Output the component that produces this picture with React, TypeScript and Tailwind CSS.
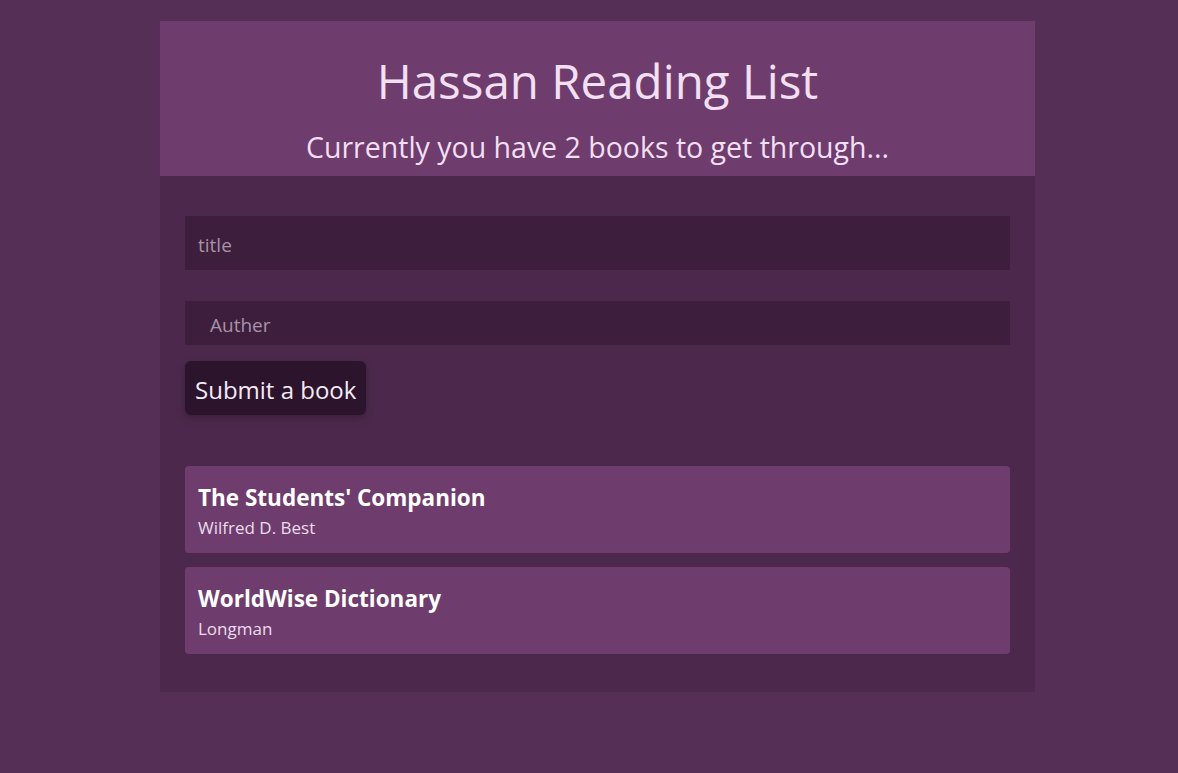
import { useState } from "react";

type Book = {
  title: string;
  author: string;
};

const books: Book[] = [
  { title: "The Students' Companion", author: "Wilfred D. Best" },
  { title: "WorldWise Dictionary", author: "Longman" },
];

export default function App() {
  const [title, setTitle] = useState("");
  const [author, setAuthor] = useState("");

  return (
    <div className="min-h-screen bg-[#552f55] pt-[21px] pl-[160px] font-['Open_Sans',sans-serif]">
      <div className="w-[875px]">
        <header className="flex h-[155px] flex-col items-center bg-[#6e3d6e] text-[#f2dff2]">
          <h1 className="mt-[36px] text-[47.5px] leading-none font-normal">Hassan Reading List</h1>
          <p className="mt-[28px] text-[28.5px] leading-none">Currently you have {books.length} books to get through...</p>
        </header>

        <div className="bg-[#4c294c] px-[25px] pt-[40px] pb-[38px]">
          <form onSubmit={(event) => event.preventDefault()}>
            <input
              className="block h-[54px] w-full bg-[#3d1f3d] px-[13px] pt-[3px] text-[19px] text-[#f2dff2] outline-none placeholder:text-[#a892a8]"
              placeholder="title"
              value={title}
              onChange={(event) => setTitle(event.target.value)}
            />
            <input
              className="mt-[31px] block h-[44px] w-full bg-[#3d1f3d] px-[25px] pt-[3px] text-[19px] text-[#f2dff2] outline-none placeholder:text-[#a892a8]"
              placeholder="Auther"
              value={author}
              onChange={(event) => setAuthor(event.target.value)}
            />
            <button
              className="mt-[16px] h-[54px] rounded-md bg-[#2c142c] px-[10px] pt-[3px] text-[24px] text-[#f5eaf5] shadow-[0_3px_8px_rgba(0,0,0,0.25)]"
              type="submit"
            >
              Submit a book
            </button>
          </form>

          <ul className="mt-[51px] flex flex-col gap-[14px]">
            {books.map((book) => (
              <li key={book.title} className="h-[87px] rounded bg-[#6e3d6e] px-[13px] pt-[18px]">
                <p className="text-[22.5px] leading-[28px] font-bold text-white">{book.title}</p>
                <p className="mt-[5px] text-[17px] leading-[22px] text-[#ecdcec]">{book.author}</p>
              </li>
            ))}
          </ul>
        </div>
      </div>
    </div>
  );
}
